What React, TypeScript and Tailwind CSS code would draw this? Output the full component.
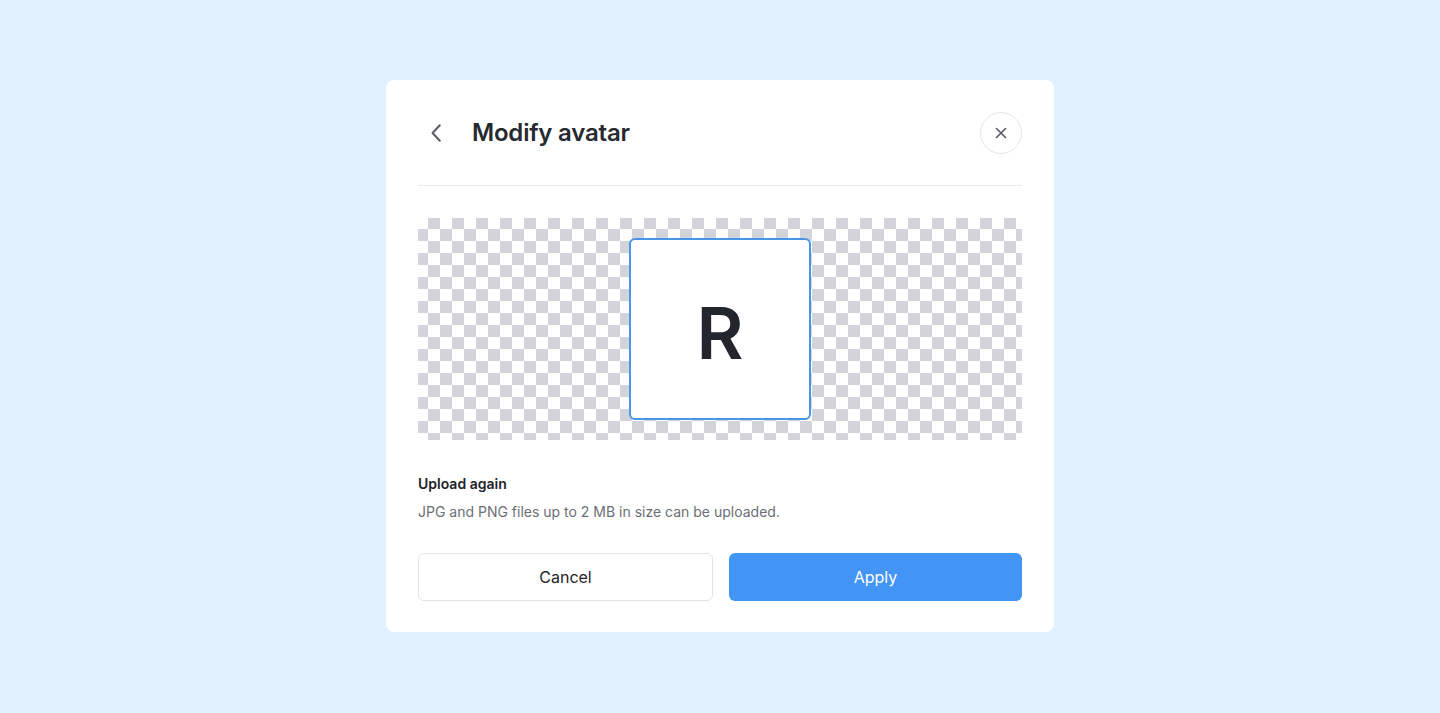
import React from 'react';

const checker: React.CSSProperties = {
  backgroundImage:
    'conic-gradient(#d3d4d9 25%, #ffffff 0 50%, #d3d4d9 0 75%, #ffffff 0)',
  backgroundSize: '24px 24px',
  backgroundPosition: '-2px -1px',
};

const App: React.FC = () => {
  return (
    <div className="min-h-screen w-full bg-[#e0f0fe] flex items-start justify-center pt-[80px] font-['Inter',sans-serif]">
      <div className="w-[668px] bg-white rounded-lg px-8 pt-[32px] pb-[31px]">
        <div className="flex items-center justify-between h-[42px]">
          <div className="flex items-center">
            <button className="w-6 h-6 ml-[7px] flex items-center justify-center text-[#5f6368]">
              <svg width="22" height="22" viewBox="0 0 20 20" fill="none">
                <path d="M12.5 3L6 10l6.5 7" stroke="currentColor" strokeWidth="2" strokeLinecap="round" strokeLinejoin="round" />
              </svg>
            </button>
            <h1 className="ml-[23px] text-[24px] font-semibold text-[#262a30] tracking-[-0.2px]">Modify avatar</h1>
          </div>
          <button className="w-[42px] h-[42px] rounded-full border border-[#e5e6e8] flex items-center justify-center text-[#555a61]">
            <svg width="14" height="14" viewBox="0 0 14 14" fill="none">
              <path d="M2.5 2.5l9 9M11.5 2.5l-9 9" stroke="currentColor" strokeWidth="1.6" strokeLinecap="round" />
            </svg>
          </button>
        </div>
        <div className="mt-[31px] h-px bg-[#e9eaec]" />
        <div className="mt-[32px] h-[222px] flex items-center justify-center" style={checker}>
          <div className="w-[182px] h-[182px] bg-white border-2 border-[#4a95e5] rounded-md flex items-center justify-center">
            <span className="text-[72px] font-semibold text-[#23272d] leading-none mt-[8px]">R</span>
          </div>
        </div>
        <div className="mt-[33px] text-[14px] font-semibold text-[#1f2329]">Upload again</div>
        <div className="mt-[7px] text-[14px] text-[#6b6f76]">JPG and PNG files up to 2 MB in size can be uploaded.</div>
        <div className="mt-[31px] flex gap-4">
          <button className="flex-1 h-[48px] rounded-md border border-[#e3e4e6] bg-white text-[16px] text-[#1f2329]">Cancel</button>
          <button className="flex-1 h-[48px] rounded-md bg-[#4295f5] text-[16px] text-white">Apply</button>
        </div>
      </div>
    </div>
  );
};

export default App;
